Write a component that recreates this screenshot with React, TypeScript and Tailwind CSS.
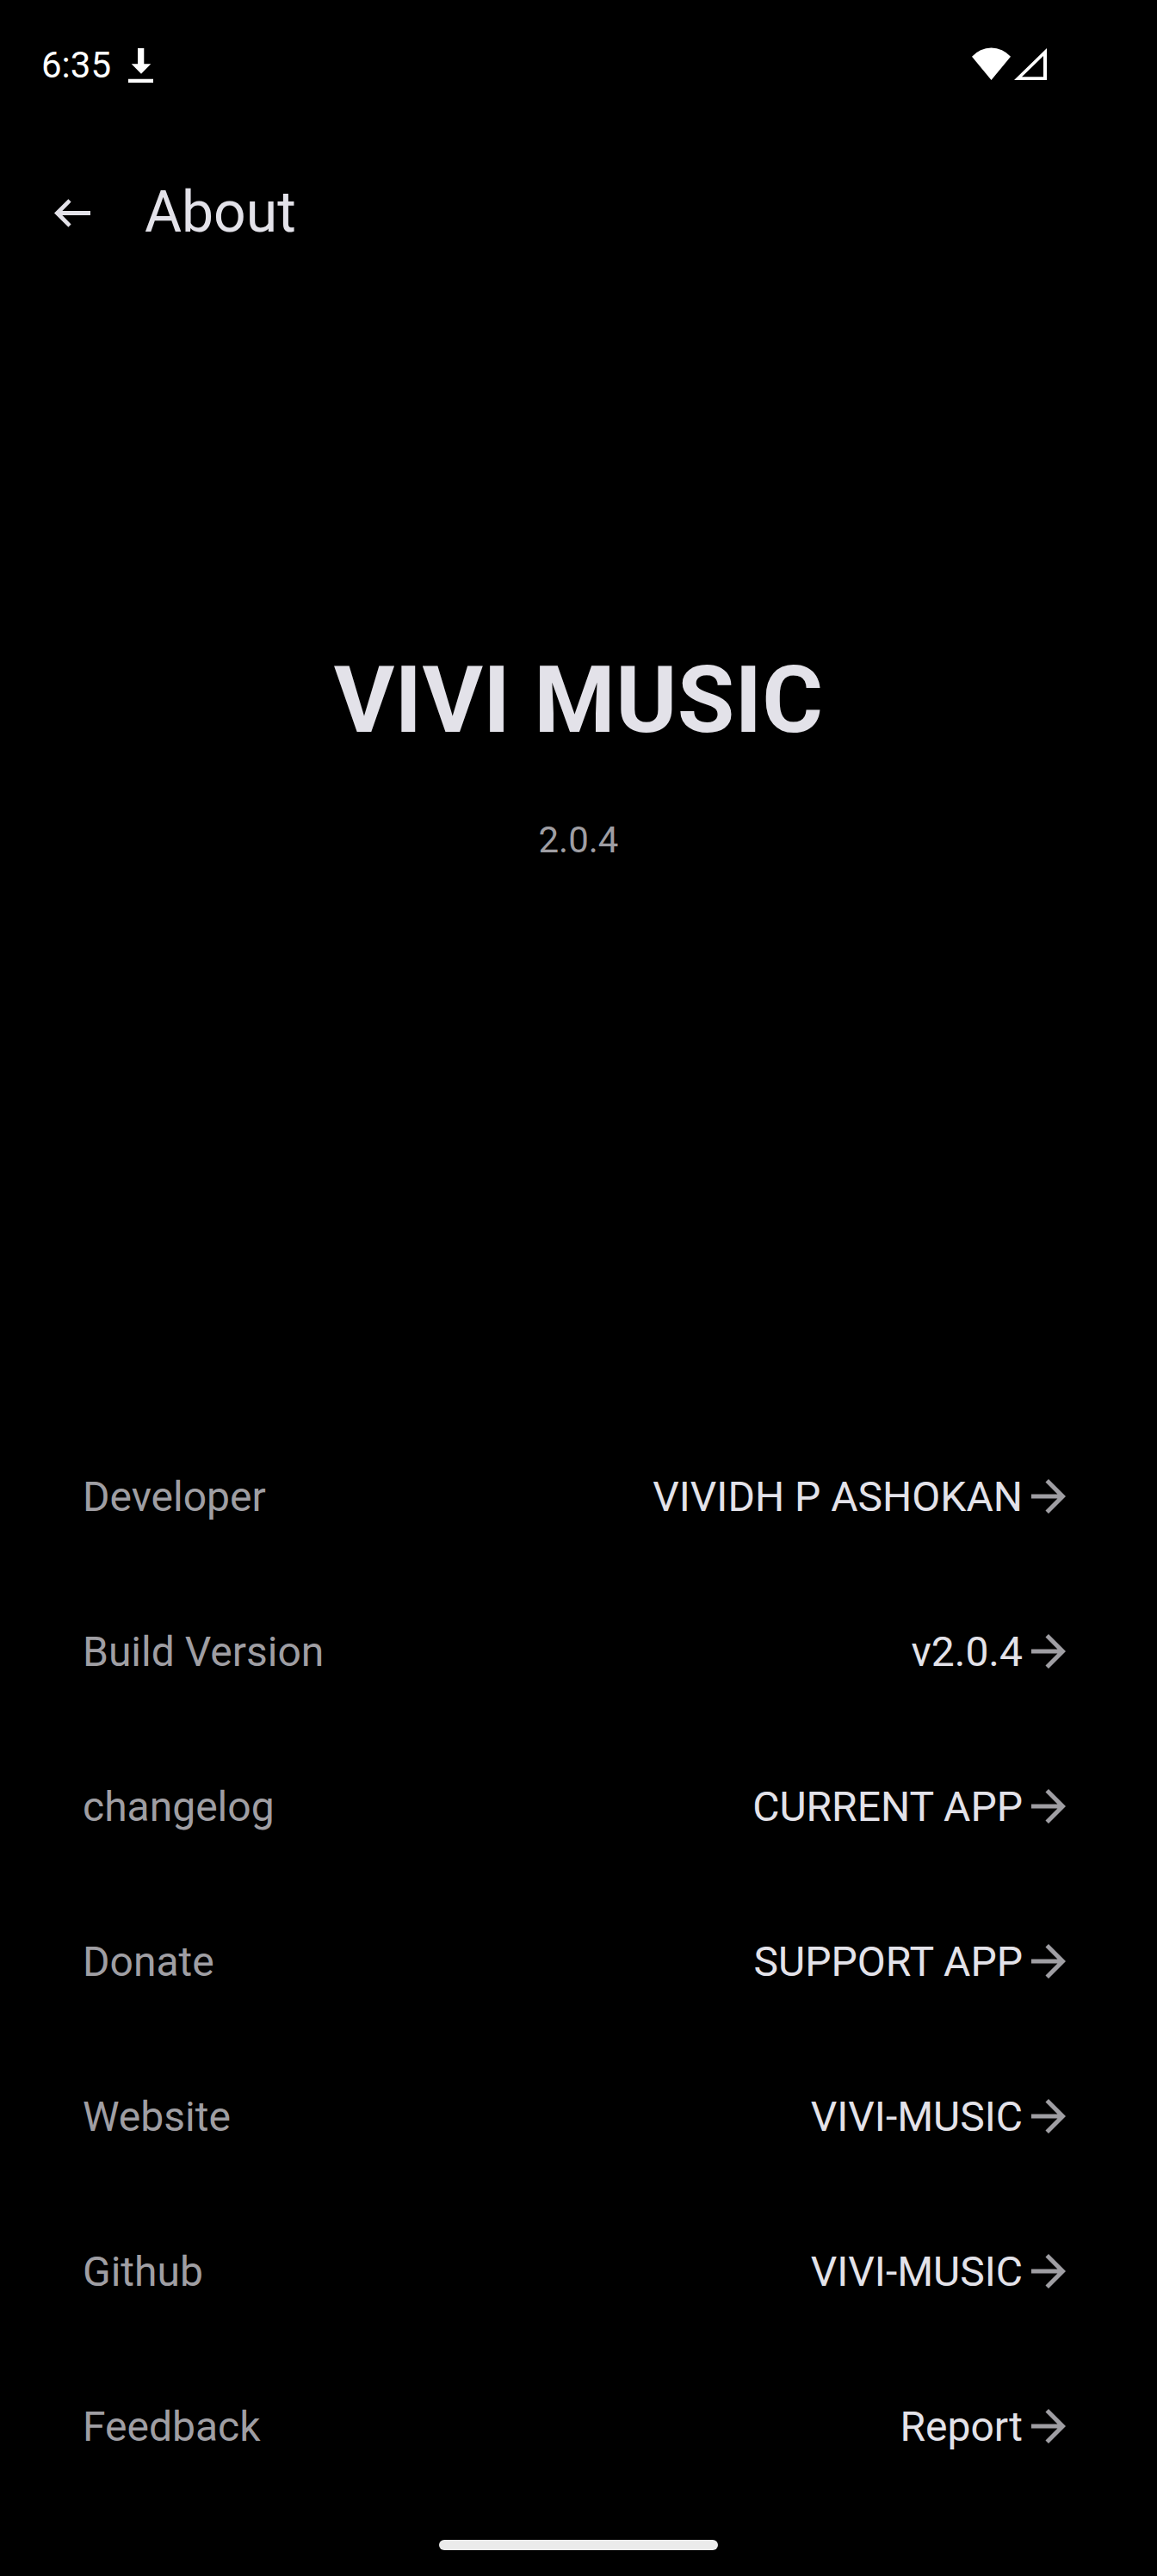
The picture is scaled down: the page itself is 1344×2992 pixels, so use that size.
import React from "react";

const rows = [
  ["Developer", "VIVIDH P ASHOKAN"],
  ["Build Version", "v2.0.4"],
  ["changelog", "CURRENT APP"],
  ["Donate", "SUPPORT APP"],
  ["Website", "VIVI-MUSIC"],
  ["Github", "VIVI-MUSIC"],
  ["Feedback", "Report"],
];

function StatusBar() {
  return (
    <header className="flex h-[150px] items-center pr-32 pl-12 text-white">
      <span className="mt-px text-[42px] leading-[49px]">6:35</span>
      <svg className="mt-0.5 ml-5 h-10 w-[29px]" viewBox="0 0 29 40" fill="currentColor">
        <path d="M11 0h7.3v18.3h8L15 29.7 3.7 18.3H11zM0 35.8h29V40H0z" />
      </svg>
      <svg className="mb-0.5 ml-auto h-[38px] w-[87px]" viewBox="0 0 87 38" fill="currentColor">
        <path d="M0 10.7A29.9 29.9 0 0 1 45 10.7L22.5 38z" />
        <path fillRule="evenodd" d="M49 38 87 1v37zM58 34.3h25V10z" />
      </svg>
    </header>
  );
}

export default function App() {
  return (
    <div className="flex h-[2992px] w-[1344px] flex-col bg-black font-['Roboto',sans-serif] text-[#e3e2e9]">
      <StatusBar />
      <div className="flex h-[192px] items-center px-[63px]">
        <svg className="mt-0.5 h-[33px] w-[42px]" viewBox="0 0 42 33" fill="currentColor">
          <path d="M0 16.5 16.4.2 19.6 3.6 9.4 14H42v5H9.4L19.6 29.4 16.4 32.8z" />
        </svg>
        <h1 className="mt-px ml-[63px] text-[66px] leading-[77px]">About</h1>
      </div>
      <main className="flex flex-1 flex-col items-center">
        <h2 className="mt-[408px] text-[108px] leading-[126px] font-bold tracking-[0.3px]">VIVI MUSIC</h2>
        <p className="mt-[75px] text-[42px] leading-[49px] text-[#9f9ea3]">2.0.4</p>
        <div className="mt-[648px] w-full px-24">
          {rows.map(([label, value]) => (
            <div key={label} className="flex h-[180px] items-center">
              <span className="mt-px text-[48px] leading-[57px] text-[#9f9ea3]">{label}</span>
              <span className="mt-px ml-auto text-[48px] leading-[57px]">{value}</span>
              <svg className="size-[60px] text-[#9f9ea3]" viewBox="0 0 24 24" fill="currentColor">
                <path d="m12 4-1.41 1.41L16.17 11H4v2h12.17l-5.58 5.59L12 20l8-8z" />
              </svg>
            </div>
          ))}
        </div>
      </main>
      <div className="mb-[30px] h-3 w-[324px] self-center rounded-full bg-[#ebebeb]" />
    </div>
  );
}
